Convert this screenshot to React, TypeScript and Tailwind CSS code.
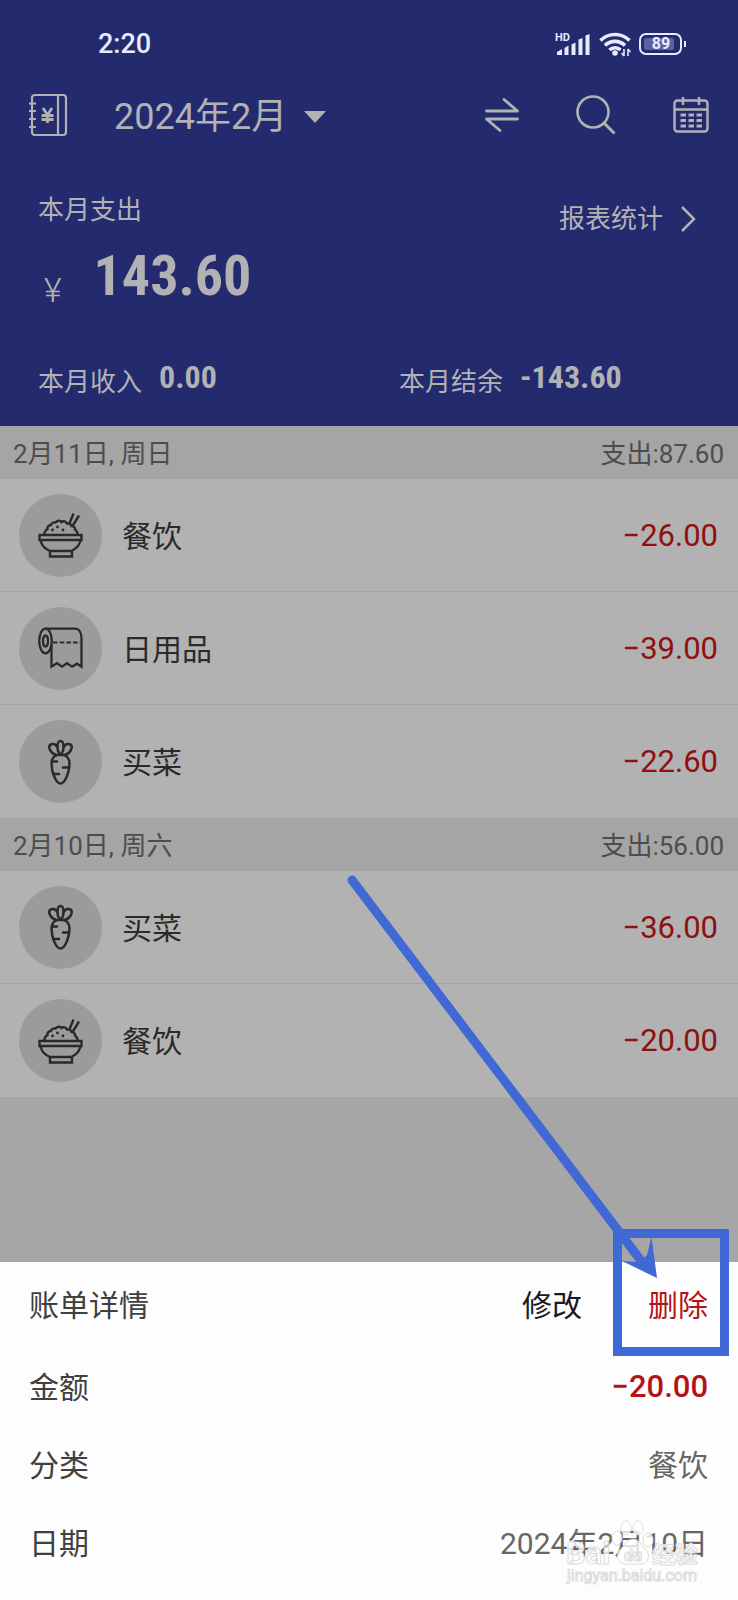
import type { ReactNode } from "react";

type Category = "餐饮" | "日用品" | "买菜";

type Entry = {
  id: number;
  category: Category;
  amount: string;
};

type Day = {
  date: string;
  total: string;
  entries: Entry[];
};

const days: Day[] = [
  {
    date: "2月11日, 周日",
    total: "87.60",
    entries: [
      { id: 1, category: "餐饮", amount: "−26.00" },
      { id: 2, category: "日用品", amount: "−39.00" },
      { id: 3, category: "买菜", amount: "−22.60" },
    ],
  },
  {
    date: "2月10日, 周六",
    total: "56.00",
    entries: [
      { id: 4, category: "买菜", amount: "−36.00" },
      { id: 5, category: "餐饮", amount: "−20.00" },
    ],
  },
];

function SignalIcon() {
  return (
    <svg width="36" height="24" viewBox="0 0 36 24" fill="currentColor">
      <text x="0" y="9" fontSize="11" fontWeight="700">HD</text>
      <path d="M2 23v-3l5-3v6zM9.500 23v-7l4-2.500v9.500zM16.500 23v-10.500l4-2v12.500zM23.500 23v-15.500l4-1.500v17zM30.500 23v-19.500l4-1.500v21z" />
    </svg>
  );
}

function WifiIcon() {
  return (
    <svg width="32" height="25" viewBox="0 0 32 25" fill="none" stroke="currentColor" strokeWidth="3.6">
      <path d="M1.500 8.500C9.500 0.500 22.500 0.500 30.500 8.500" />
      <path d="M6 13.500C11.500 8 20.500 8 26 13.500" />
      <path d="M10.500 18C13.500 15 18.500 15 21.500 18" />
      <circle cx="16" cy="21" r="2.800" fill="currentColor" stroke="none" />
      <path d="M25 17v7M29 17v7" strokeWidth="1.600" />
      <path d="M22.500 21l2.500 3M31.500 20l-2.500-3" strokeWidth="1.400" />
    </svg>
  );
}

function Battery({ level }: { level: number }) {
  return (
    <div className="flex items-center gap-[2px]">
      <div className="h-[22px] w-[43px] rounded-[7px] border-2 border-current p-[3px]">
        <div className="flex h-full w-[30px] items-center justify-center rounded-[2px] bg-[#5a61a0] pl-[4px] text-[16px] font-bold leading-none">
          {level}
        </div>
      </div>
      <div className="h-[6px] w-[2px] bg-current" />
    </div>
  );
}

function LedgerIcon() {
  return (
    <svg width="40" height="44" viewBox="0 0 40 44" fill="none" stroke="currentColor" strokeWidth="2.200">
      <rect x="4" y="2" width="34" height="40" rx="3" />
      <path d="M30 2v40" />
      <path d="M1 10.500h7M1 18h7M1 26h7M1 34h7" />
      <path d="M15 15l4.500 7 4.500-7M19.500 22v8M13.500 22.500h12M13.500 26.500h12" strokeWidth="2.800" />
    </svg>
  );
}

function SwapIcon() {
  return (
    <svg width="34" height="34" viewBox="0 0 34 34" fill="none" stroke="currentColor" strokeWidth="2.800" strokeLinecap="round" strokeLinejoin="round">
      <path d="M1.500 13h31l-13.500-11.500" />
      <path d="M32.500 21h-31l13.500 11.500" />
    </svg>
  );
}

function SearchIcon() {
  return (
    <svg width="40" height="40" viewBox="0 0 40 40" fill="none" stroke="currentColor" strokeWidth="2.600">
      <circle cx="17" cy="17" r="15.500" />
      <path d="M28 28l10.500 10.500" strokeWidth="3" />
    </svg>
  );
}

function CalendarIcon() {
  return (
    <svg width="36" height="36" viewBox="0 0 36 36" fill="none" stroke="currentColor" strokeWidth="2.400">
      <rect x="1.500" y="3.500" width="33" height="31" rx="3" />
      <path d="M1.500 12.500h33M10 0v8M26 0v8" />
      <path d="M7.500 18h5.500M15.500 18h5.500M23.500 18h5.500M7.500 23.500h5.500M15.500 23.500h5.500M23.500 23.500h5.500M7.500 29h5.500M15.500 29h5.500M23.500 29h5.500" strokeWidth="2.800" />
    </svg>
  );
}

function BowlIcon() {
  return (
    <svg width="46" height="46" viewBox="0 0 46 46" fill="none" stroke="currentColor" strokeWidth="2.400">
      <path d="M1.500 23h42v5h-42z" />
      <path d="M2.500 28.500C4 34 8 37.500 12 39h21c4-1.500 8-5 9.500-10.500" />
      <path d="M12 39v5.500h22v-5.500" />
      <path d="M6 23c.500-3 1.500-5 3.500-6-.500-2.500 1.500-4 3.500-4 .500-2 2.500-3 4.500-2.500 1.500-2 4.500-2.500 6-.500 2-1.500 4.500-.500 5.500 1.500 2-.500 4 .500 4.500 2.500 2.500 0 4 2 3.500 3.500 1.500 1 2.500 3 3 5.500" />
      <path d="M35.500 1.500L31 12.500M41 3.500l-6.500 10.500" />
      <g fill="currentColor" stroke="none">
        <circle cx="14.500" cy="18" r="1.400" />
        <circle cx="19.500" cy="15" r="1.400" />
        <circle cx="25" cy="18" r="1.400" />
      </g>
    </svg>
  );
}

function TissueIcon() {
  return (
    <svg width="46" height="46" viewBox="0 0 46 46" fill="none" stroke="currentColor" strokeWidth="2.300">
      <ellipse cx="7.500" cy="16" rx="6.300" ry="12.300" />
      <ellipse cx="7.500" cy="16" rx="2.500" ry="5.500" />
      <path d="M7.500 3.700H37c4 0 6.500 4 6.500 10v28l-4.500-3-5 3-5-3.500-5 3.500-5-3.500-5.500 3.500V20" />
      <path d="M15 17.500h27" strokeWidth="1.900" strokeDasharray="4.500 2.200" />
    </svg>
  );
}

function CarrotIcon() {
  return (
    <svg width="46" height="46" viewBox="0 0 46 46" fill="none" stroke="currentColor" strokeWidth="2.500" strokeLinecap="round">
      <path d="M22.500 44.500c-4 0-9-10-9-20 0-5 3-8.500 6-8.500h6c3 0 6 3.500 6 8.500 0 10-5 20-9 20z" />
      <path d="M22.500 15.500c-4-3-4-13.500 0-13.500s4 10.500 0 13.500z" />
      <path d="M18.500 16c-6-1-8.500-8-6.500-10s5.500-1 7 1.500M26.500 16c6-1 8.500-8 6.500-10s-5.500-1-7 1.500" />
      <path d="M14 22.500h5M31 28.500h-6M15 35h6" />
    </svg>
  );
}

const icons: Record<Category, ReactNode> = {
  餐饮: <BowlIcon />,
  日用品: <TissueIcon />,
  买菜: <CarrotIcon />,
};

function EntryRow({ entry }: { entry: Entry }) {
  return (
    <li className="flex h-[113px] items-center gap-[20px] border-b border-[#a6a6a6] pl-[19px] pr-[20px] last:border-b-0">
      <div className="flex size-[83px] items-center justify-center rounded-full bg-[#9b9b9b] text-[#2a2a2a]">
        {icons[entry.category]}
      </div>
      <span className="flex-1 pt-[2px] text-[30px] text-[#2a2a2a]">{entry.category}</span>
      <span className="pt-[2px] text-[31px] text-[#8f0f12]">{entry.amount}</span>
    </li>
  );
}

function Header() {
  return (
    <header className="bg-[#232b6e] text-[#b2b2b5]">
      <div className="flex h-[88px] items-center pl-[98px] pr-[52px] text-[#e8ebff]">
        <span className="flex-1 text-[27px] font-medium">2:20</span>
        <div className="flex items-center gap-[8px]">
          <SignalIcon />
          <WifiIcon />
          <Battery level={89} />
        </div>
      </div>

      <div className="flex h-[54px] items-center pl-[28px] pr-[29px]">
        <button aria-label="账本"><LedgerIcon /></button>
        <button className="ml-[46px] flex items-center gap-[17px] pt-[3px] text-[36px]">
          2024年2月
          <svg width="22" height="12" viewBox="0 0 22 12" fill="currentColor">
            <path d="M0 0h22l-11 12z" />
          </svg>
        </button>
        <div className="ml-auto flex items-center gap-[57px]">
          <button aria-label="转账"><SwapIcon /></button>
          <button aria-label="搜索"><SearchIcon /></button>
          <button aria-label="日历"><CalendarIcon /></button>
        </div>
      </div>

      <div className="px-[38px] pb-[24px] pt-[49px]">
        <div className="flex h-[38px] items-center justify-between text-[26px]">
          <span>本月支出</span>
          <a href="#report" className="mt-[18px] flex items-center gap-[17px] pr-[4px]">
            报表统计
            <svg width="16" height="26" viewBox="0 0 16 26" fill="none" stroke="currentColor" strokeWidth="2.500">
              <path d="M2 1l12 12-12 12" />
            </svg>
          </a>
        </div>
        <div className="mt-[17px] flex h-[60px] items-end gap-[32px] pl-[6px]">
          <span className="text-[34px] font-light leading-[32px]">¥</span>
          <span className="font-['Roboto_Condensed'] text-[56px] font-bold leading-[60px]">143.60</span>
        </div>
        <div className="mt-[56px] grid grid-cols-[361px_1fr] text-[26px] leading-[40px]">
          <div className="flex items-start gap-[17px]">
            本月收入
            <span className="font-['Roboto_Condensed'] text-[32px] font-bold leading-[30px]">0.00</span>
          </div>
          <div className="flex items-start gap-[17px]">
            本月结余
            <span className="font-['Roboto_Condensed'] text-[32px] font-bold leading-[30px]">-143.60</span>
          </div>
        </div>
      </div>
    </header>
  );
}

function Pointer() {
  return (
    <svg className="pointer-events-none absolute -top-[392px] right-0" width="400" height="420" viewBox="0 0 400 420" fill="#4169d6">
      <path d="M14 10L304 392" stroke="#4169d6" strokeWidth="9" strokeLinecap="round" />
      <path d="M319 408l-35-17 18 1 7-7 4.500-18z" />
    </svg>
  );
}

function Watermark() {
  return (
    <svg className="pointer-events-none absolute bottom-[14px] right-[36px]" width="140" height="70" viewBox="0 0 140 70" fill="#ffffff" fillOpacity="0.8" stroke="#dcdcdc" strokeWidth="1">
      <ellipse cx="55" cy="22" rx="5" ry="7" />
      <ellipse cx="64" cy="12" rx="5" ry="7" />
      <ellipse cx="76" cy="12" rx="5" ry="7" />
      <ellipse cx="86" cy="24" rx="5" ry="7" />
      <path d="M71 23c6 0 9 7 13 11 5 5 2 14-5 14-4 0-12 0-16 0-7 0-10-9-5-14 4-4 7-11 13-11z" />
      <text x="4" y="48" fontSize="31" fontWeight="700">Bai</text>
      <text x="62" y="45" fontSize="16" fontWeight="700">du</text>
      <text x="90" y="47" fontSize="23" fontWeight="700">经验</text>
      <text x="5" y="65" fontSize="16">jingyan.baidu.com</text>
    </svg>
  );
}

function DetailRow({ label, children }: { label: string; children: ReactNode }) {
  return (
    <div className="flex h-[78px] items-center justify-between">
      <dt>{label}</dt>
      <dd className="text-[#666666]">{children}</dd>
    </div>
  );
}

function DetailSheet() {
  return (
    <section className="relative bg-[#fdfdfd] pb-[18px] pl-[29px] pr-[30px] text-[30px] text-[#404040]">
      <div className="flex h-[86px] items-center">
        <h2 className="flex-1">账单详情</h2>
        <button className="text-[#1a1a1a]">修改</button>
        <div className="relative ml-[66px]">
          <button className="text-[#b51216]">删除</button>
          <div className="pointer-events-none absolute -bottom-[28px] -left-[35px] -right-[21px] -top-[54px] border-[9px] border-[#4169d6]" />
        </div>
      </div>
      <dl>
        <DetailRow label="金额">
          <span className="text-[31px] font-medium text-[#b51216]">−20.00</span>
        </DetailRow>
        <DetailRow label="分类">餐饮</DetailRow>
        <DetailRow label="日期">2024年2月10日</DetailRow>
      </dl>
      <Pointer />
      <Watermark />
    </section>
  );
}

export default function App() {
  return (
    <div className="flex min-h-screen flex-col bg-[#a6a6a6] font-['Roboto','Noto_Sans_CJK_SC',sans-serif]">
      <Header />
      <main className="flex-1">
        {days.map((day) => (
          <section key={day.date}>
            <div className="flex h-[53px] items-center justify-between bg-[#a5a5a5] pl-[13px] pr-[14px] pt-[3px] text-[26px] text-[#4d4d4d]">
              <h2>{day.date}</h2>
              <span>支出:{day.total}</span>
            </div>
            <ul className="bg-[#b2b2b2]">
              {day.entries.map((entry) => (
                <EntryRow key={entry.id} entry={entry} />
              ))}
            </ul>
          </section>
        ))}
      </main>
      <DetailSheet />
    </div>
  );
}
